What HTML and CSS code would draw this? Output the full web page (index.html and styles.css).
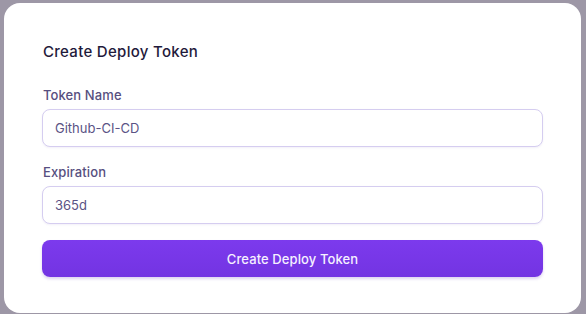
FILE: index.html
```html
<!DOCTYPE html>
<html lang="en">
<head>
<meta charset="utf-8">
<title>Create Deploy Token</title>
<link rel="stylesheet" href="styles.css">
</head>
<body>
<div class="card">
  <h2 class="title">Create Deploy Token</h2>
  <div class="field">
    <label class="label" for="name">Token Name</label>
    <input class="input" id="name" type="text" value="Github-CI-CD">
  </div>
  <div class="field">
    <label class="label" for="exp">Expiration</label>
    <input class="input" id="exp" type="text" value="365d">
  </div>
  <button class="btn" type="button">Create Deploy Token</button>
</div>
</body>
</html>
```
FILE: styles.css
```css
* { box-sizing: border-box; }
html, body { margin: 0; height: 100%; }
body {
  background: #9d97a6;
  padding: 3px 5px 0 4px;
  font-family: Inter, "Noto Sans", sans-serif;
  overflow: hidden;
}
.card {
  background: #ffffff;
  border-radius: 16px;
  padding: 39px 38px 36px 38px;
  display: flex;
  flex-direction: column;
}
.title {
  margin: 0 0 24px 1px;
  font-size: 15px;
  line-height: 20px;
  font-weight: 500;
  letter-spacing: 0.3px;
  color: #1f1a3b;
}
.field {
  display: flex;
  flex-direction: column;
  margin-bottom: 16px;
}
.label {
  font-size: 13px;
  line-height: 18px;
  font-weight: 500;
  letter-spacing: 0.1px;
  color: #574f80;
  margin: 0 0 5px 1px;
}
.input {
  height: 38px;
  border: 1px solid #d5cdf0;
  border-radius: 8px;
  padding: 0 12px;
  font-family: inherit;
  font-size: 13px;
  color: #5a5385;
  background: #fff;
  box-shadow: 0 1px 2px rgba(90, 70, 160, 0.08);
  outline: none;
}
.btn {
  height: 37px;
  border: none;
  border-radius: 8px;
  background: linear-gradient(#7c3aed, #7334e2);
  color: #f5f0ff;
  font-family: inherit;
  font-size: 13px;
  font-weight: 500;
  letter-spacing: 0.1px;
  box-shadow: 0 2px 3px rgba(90, 40, 180, 0.2);
}
```
